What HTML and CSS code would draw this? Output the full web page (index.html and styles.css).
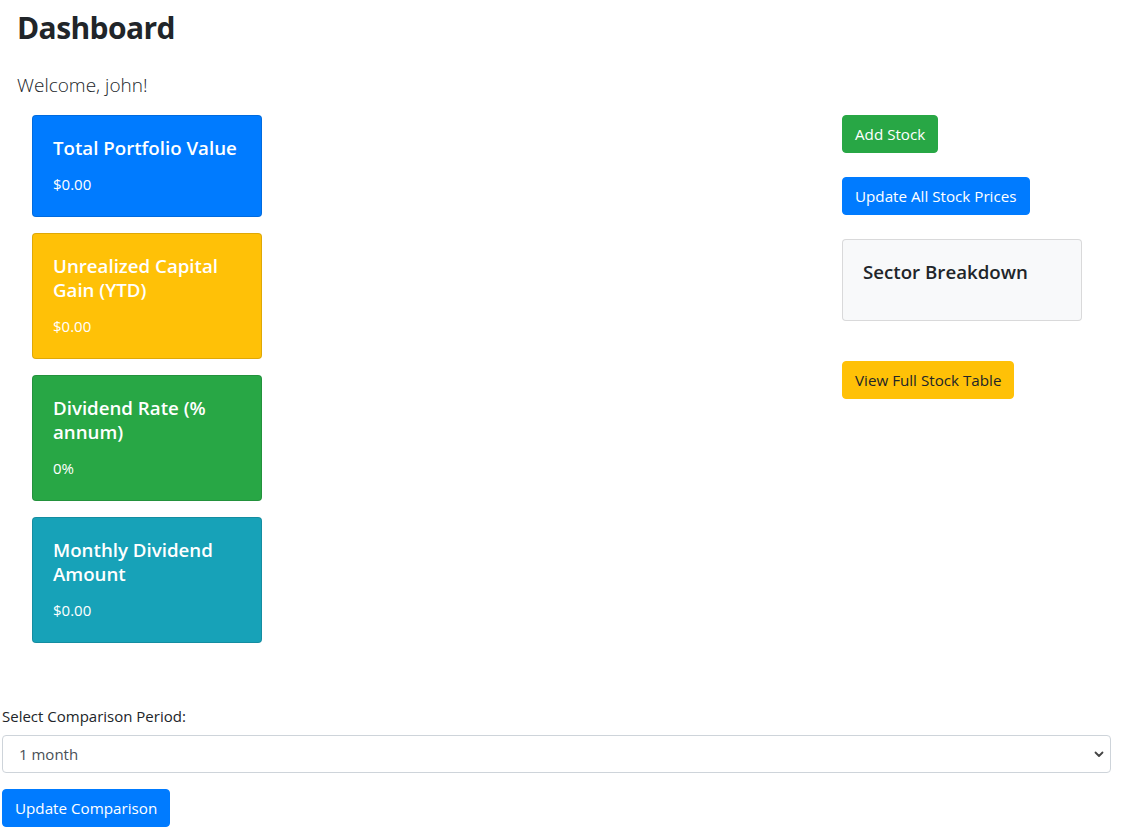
FILE: index.html
```html
<!DOCTYPE html>
<html lang="en">
<head>
<meta charset="utf-8">
<title>Dashboard</title>
<link rel="stylesheet" href="styles.css">
</head>
<body>
<div class="container">
  <h1 class="page-title">Dashboard</h1>
  <p class="lead">Welcome, john!</p>
  <div class="row">
    <div class="col-left">
      <div class="card card-blue">
        <h5 class="card-title">Total Portfolio Value</h5>
        <p class="card-text">$0.00</p>
      </div>
      <div class="card card-yellow">
        <h5 class="card-title">Unrealized Capital Gain (YTD)</h5>
        <p class="card-text">$0.00</p>
      </div>
      <div class="card card-green">
        <h5 class="card-title">Dividend Rate (% annum)</h5>
        <p class="card-text">0%</p>
      </div>
      <div class="card card-teal">
        <h5 class="card-title">Monthly Dividend Amount</h5>
        <p class="card-text">$0.00</p>
      </div>
    </div>
    <div class="col-right">
      <button class="btn btn-green">Add Stock</button>
      <button class="btn btn-blue">Update All Stock Prices</button>
      <div class="sector-card">
        <h5 class="sector-title">Sector Breakdown</h5>
      </div>
      <button class="btn btn-yellow">View Full Stock Table</button>
    </div>
  </div>
</div>
<div class="compare">
  <label class="compare-label" for="period">Select Comparison Period:</label>
  <div class="select-wrap">
    <select id="period" class="select">
      <option>1 month</option>
      <option>3 months</option>
      <option>6 months</option>
      <option>1 year</option>
    </select>
    <svg class="chev" width="10" height="8" viewBox="0 0 10 8"><path d="M1.5 2.5 L5 6 L8.5 2.5" fill="none" stroke="#444" stroke-width="1.8" stroke-linecap="round" stroke-linejoin="round"/></svg>
  </div>
  <button class="btn btn-blue">Update Comparison</button>
</div>
</body>
</html>
```

FILE: styles.css
```css
* { box-sizing: border-box; }
body {
  margin: 0;
  font-family: "Open Sans", "Noto Sans", "Liberation Sans", sans-serif;
  font-size: 15px;
  line-height: 24px;
  color: #212529;
  background: #fff;
}
.container { padding: 9px 15px 0 15px; }
.page-title {
  margin: 0 0 0 2px;
  font-size: 30px;
  line-height: 38px;
  font-weight: 700;
  letter-spacing: -0.6px;
}
.lead {
  margin: 23px 0 15px 2px;
  font-size: 19px;
  line-height: 30px;
  font-weight: 300;
}
.row { display: flex; align-items: flex-start; }
.col-left {
  margin-left: 17px;
  width: 230px;
  display: flex;
  flex-direction: column;
  gap: 16px;
}
.col-right {
  margin-left: 580px;
  width: 240px;
  display: flex;
  flex-direction: column;
  align-items: flex-start;
}
.card {
  border: 1px solid rgba(0,0,0,.125);
  border-radius: 4px;
  padding: 20px;
  color: #fff;
}
.card-blue { background: #007bff; }
.card-yellow { background: #ffc107; }
.card-green { background: #28a745; }
.card-teal { background: #17a2b8; }
.card-title {
  margin: 0 0 12px 0;
  font-size: 18.7px;
  line-height: 24px;
  font-weight: 600;
}
.card-text { margin: 0; font-size: 15px; line-height: 24px; }
.btn {
  display: inline-block;
  font-family: inherit;
  font-size: 15.2px;
  line-height: 24px;
  padding: 6px 12px;
  border: 1px solid transparent;
  border-radius: 4px;
  color: #fff;
  cursor: pointer;
}
.btn-green { background: #28a745; border-color: #28a745; }
.btn-blue { background: #007bff; border-color: #007bff; }
.btn-yellow { background: #ffc107; border-color: #ffc107; color: #212529; }
.col-right .btn-blue { margin-top: 24px; }
.sector-card {
  margin-top: 24px;
  width: 240px;
  height: 82px;
  background: #f8f9fa;
  border: 1px solid rgba(0,0,0,.125);
  border-radius: 4px;
  padding: 20px;
}
.sector-title {
  margin: 0;
  font-size: 18.7px;
  line-height: 24px;
  font-weight: 600;
}
.col-right .btn-yellow { margin-top: 40px; }
.compare {
  margin-top: 61px;
  padding-left: 2px;
  width: 1111px;
}
.compare-label { display: block; margin-bottom: 7px; font-size: 15px; line-height: 24px; }
.select-wrap { position: relative; margin-bottom: 16px; }
.select {
  display: block;
  width: 100%;
  height: 38px;
  padding: 6px 12px 6px 16px;
  font-family: inherit;
  font-size: 15px;
  color: #495057;
  background: #fff;
  border: 1px solid #ced4da;
  border-radius: 4px;
  -webkit-appearance: none;
  appearance: none;
}
.chev { position: absolute; right: 7px; top: 15px; }
```
